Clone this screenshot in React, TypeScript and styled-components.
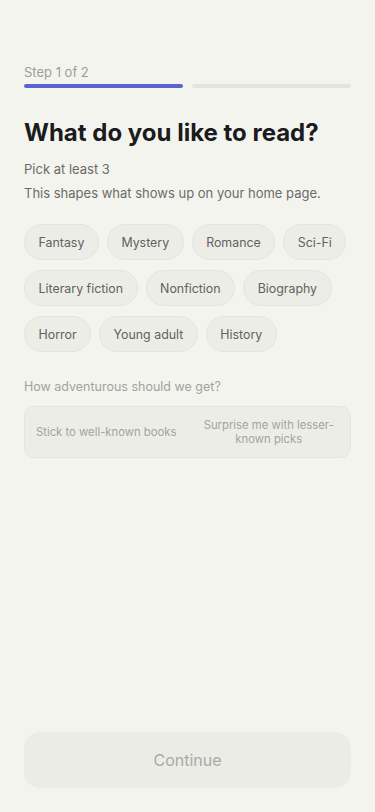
import styled, { createGlobalStyle } from "styled-components";

const GlobalStyle = createGlobalStyle`
  * { box-sizing: border-box; }
  body {
    margin: 0;
    background: #f4f4ef;
    font-family: Inter, "Liberation Sans", sans-serif;
    -webkit-font-smoothing: antialiased;
  }
`;

const genres = [
  "Fantasy",
  "Mystery",
  "Romance",
  "Sci-Fi",
  "Literary fiction",
  "Nonfiction",
  "Biography",
  "Horror",
  "Young adult",
  "History",
];

const App = (): JSX.Element => {
  return (
    <Page>
      <GlobalStyle />
      <Top>
        <StepLabel>Step 1 of 2</StepLabel>
        <Progress>
          <Segment active />
          <Segment active={false} />
        </Progress>
        <Title>What do you like to read?</Title>
        <Hint>Pick at least 3</Hint>
        <Sub>This shapes what shows up on your home page.</Sub>
        <Chips>
          {genres.map((g) => (
            <Chip key={g}>{g}</Chip>
          ))}
        </Chips>
        <SectionLabel>How adventurous should we get?</SectionLabel>
        <Range>
          <RangeOption>Stick to well-known books</RangeOption>
          <RangeOption>Surprise me with lesser-known picks</RangeOption>
        </Range>
      </Top>
      <ContinueButton disabled>Continue</ContinueButton>
    </Page>
  );
};

export default App;

const Page = styled.div`
  min-height: 812px;
  display: flex;
  flex-direction: column;
  justify-content: space-between;
  padding: 64px 24px 24px;
`;

const Top = styled.div`
  display: flex;
  flex-direction: column;
`;

const StepLabel = styled.p`
  margin: 0;
  font-size: 13px;
  line-height: 16px;
  color: #9d9d98;
`;

const Progress = styled.div`
  display: flex;
  gap: 9px;
  margin-top: 4px;
`;

const Segment = styled.div<{ active: boolean }>`
  flex: 1;
  height: 4px;
  border-radius: 2px;
  background: ${(props) => (props.active ? "#5b63cf" : "#e4e4df")};
`;

const Title = styled.h1`
  margin: 30px 0 0;
  font-size: 24px;
  line-height: 30px;
  font-weight: 700;
  color: #1b1b1d;
`;

const Hint = styled.p`
  margin: 11px 0 0;
  font-size: 13px;
  line-height: 20px;
  color: #6b6b68;
`;

const Sub = styled.p`
  margin: 4px 0 0;
  font-size: 13px;
  line-height: 20px;
  color: #6b6b68;
`;

const Chips = styled.div`
  display: flex;
  flex-wrap: wrap;
  gap: 10px 8px;
  margin-top: 21px;
`;

const Chip = styled.button`
  height: 36px;
  padding: 0 13.5px;
  border-radius: 18px;
  border: 1px solid #e5e5df;
  background: #ededE8;
  font-family: inherit;
  font-size: 12.4px;
  color: #626260;
  cursor: pointer;
`;

const SectionLabel = styled.p`
  margin: 26px 0 0;
  font-size: 12.5px;
  line-height: 18px;
  color: #a2a29e;
`;

const Range = styled.div`
  display: grid;
  grid-template-columns: 1fr 1fr;
  margin-top: 10px;
  height: 52px;
  border: 1px solid #e5e5df;
  border-radius: 10px;
  background: #ededE8;
`;

const RangeOption = styled.div`
  display: flex;
  align-items: center;
  justify-content: center;
  text-align: center;
  padding: 0 6px;
  font-size: 11.3px;
  line-height: 14px;
  color: #a3a39f;
`;

const ContinueButton = styled.button`
  height: 56px;
  width: 100%;
  border: none;
  border-radius: 16px;
  background: #ecece7;
  font-family: inherit;
  font-size: 16px;
  color: #a9a9a5;
`;
